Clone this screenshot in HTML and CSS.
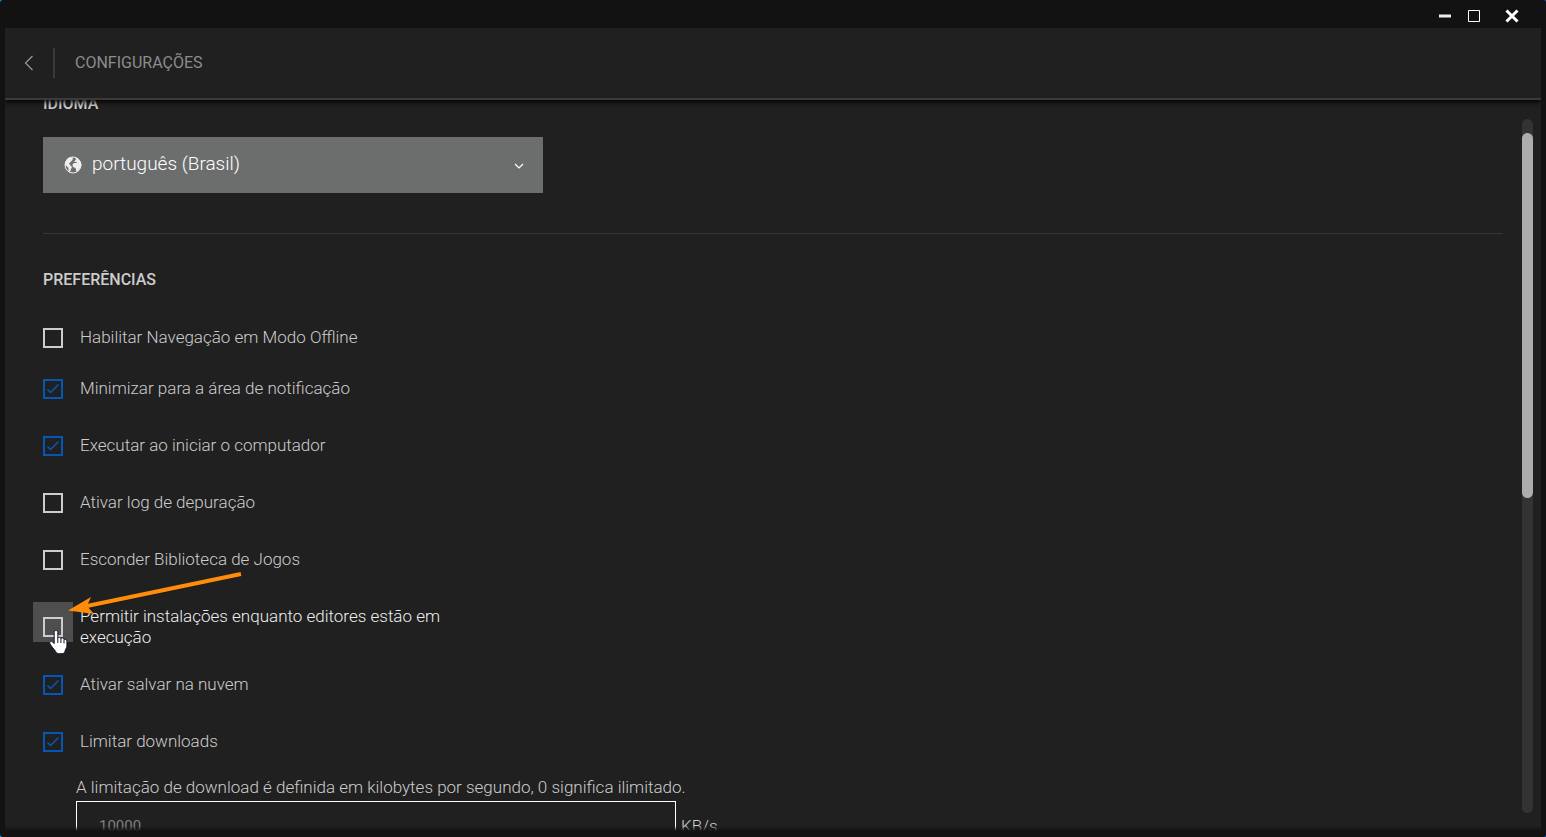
FILE: index.html
```
<!DOCTYPE html>
<html lang="pt-BR">
<head>
<meta charset="utf-8">
<title>Configurações</title>
<link rel="stylesheet" href="styles.css">
</head>
<body>
<div class="window">
  <div class="titlebar">
    <button class="win-btn" type="button" aria-label="Minimizar"><svg width="12" height="12" viewBox="0 0 12 12"><path d="M0 4.500h12v3H0z" fill="#eee"/></svg></button>
    <button class="win-btn" type="button" aria-label="Maximizar"><svg width="12" height="12" viewBox="0 0 12 12"><path d="M.5.5h11v11H.5z" fill="none" stroke="#fff"/></svg></button>
    <button class="win-btn win-close" type="button" aria-label="Fechar"><svg width="14" height="14" viewBox="0 0 14 14"><path d="M1.500 1.500l11 11M12.500 1.500l-11 11" stroke="#fff" stroke-width="3"/></svg></button>
  </div>
  <header class="header">
    <button class="back" type="button" aria-label="Voltar"><svg width="10" height="16" viewBox="0 0 10 16"><path d="M8.500 1L1.500 8l7 7" fill="none" stroke="#999" stroke-width="1.200"/></svg></button>
    <h1 class="title">CONFIGURAÇÕES</h1>
  </header>
  <main class="view">
    <div class="content">
      <section class="language">
        <h2 class="heading"><label for="lang">IDIOMA</label></h2>
        <div class="select-wrap">
          <svg class="globe" width="18" height="18" viewBox="0 0 18 18"><circle cx="9" cy="9" r="8" fill="none" stroke="#eee" stroke-width="1"/><path d="M1 7L3 3l3-2 3 .5L8.500 4 6.500 6 5 7.500 6.500 9.500 8 11 7 13l-1 3L4.500 15.500 4.500 12 2.500 10 1 9zM10 6l2-2.500-1-1L13 2l3 3 1.500 4-1.500 3-2 3-1.500 1-1-4-2.500-1-.5-2.500L10 7h2.500l.5-1z" fill="#eee"/></svg>
          <select class="select" id="lang"><option>português (Brasil)</option></select>
          <svg class="chevron" width="10" height="6" viewBox="0 0 10 6"><path d="M1 1l4 4 4-4" fill="none" stroke="#fff" stroke-width="1.200"/></svg>
        </div>
      </section>
      <section class="preferences">
        <h2 class="heading">PREFERÊNCIAS</h2>
        <div class="row row-first"><input class="check" type="checkbox" id="p1"><label for="p1">Habilitar Navegação em Modo Offline</label></div>
        <div class="row"><input class="check" type="checkbox" id="p2" checked><label for="p2">Minimizar para a área de notificação</label></div>
        <div class="row"><input class="check" type="checkbox" id="p3" checked><label for="p3">Executar ao iniciar o computador</label></div>
        <div class="row"><input class="check" type="checkbox" id="p4"><label for="p4">Ativar log de depuração</label></div>
        <div class="row"><input class="check" type="checkbox" id="p5"><label for="p5">Esconder Biblioteca de Jogos</label></div>
        <div class="row row-active"><input class="check" type="checkbox" id="p6"><label for="p6">Permitir instalações enquanto editores estão em execução</label>
          <svg class="pointer" width="220" height="90" viewBox="0 0 220 90" aria-hidden="true">
            <path d="M207.500 2.500L56 34.500" stroke="#111" stroke-width="4" opacity=".4" transform="translate(1 2)"/>
            <path d="M208 4L54 36" stroke="#ff8c0a" stroke-width="4"/>
            <path d="M35 40.500L58 27 54 36 61 44z" fill="#ff8c0a"/>
            <path d="M21.200 62.500c0-2.700 3.600-2.700 3.600 0v5.500c.8-1.200 2.800-.9 3.100.5 1-1 2.700-.6 3.100.9 1.400-.7 2.900.1 2.900 1.700v4.700c0 2.300-1.800 3.600-1.800 5.200-.3 2-1.500 2.700-4.600 2.700s-4.600-.5-5-2.500c-1.500-2-3.900-4.700-5.300-7-1.300-2.200.7-3.800 2.400-2.300l1.600 1.700z" fill="#fff" stroke="#151b2c" stroke-width="1"/>
            <path d="M24.800 68v5M27.900 68.500v4.500M31 69.400v4" stroke="#151b2c" stroke-width="1"/>
          </svg>
        </div>
        <div class="row row-after"><input class="check" type="checkbox" id="p7" checked><label for="p7">Ativar salvar na nuvem</label></div>
        <div class="row"><input class="check" type="checkbox" id="p8" checked><label for="p8">Limitar downloads</label></div>
        <div class="limit">
          <label for="rate">A limitação de download é definida em kilobytes por segundo, 0 significa ilimitado.</label>
          <div class="rate-line"><input class="rate" type="text" id="rate" placeholder="10000"><span>KB/s</span></div>
        </div>
      </section>
    </div>
    <div class="track"><div class="thumb"></div></div>
  </main>
</div>
</body>
</html>
```
FILE: styles.css
```
* { box-sizing: border-box; }
body {
  margin: 0;
  background: linear-gradient(90deg, #0a9fff, #0050c8);
  font: 300 17px/21px Roboto, "Liberation Sans", sans-serif;
  color: #ccc;
}
button { background: none; border: 0; padding: 0; color: inherit; display: grid; place-items: center; }
.window {
  height: 100vh;
  display: flex;
  flex-direction: column;
  background: #121212;
  border-radius: 3px;
  padding: 0 5px 6px;
}
.titlebar {
  flex: none;
  height: 28px;
  padding: 4px 22px 0 0;
  display: flex;
  justify-content: flex-end;
  align-items: center;
  gap: 17px;
}
.win-close { margin-left: 8px; }
.header {
  flex: none;
  height: 72px;
  background: #202020;
  border-bottom: 2px solid #3a3a3a;
  box-shadow: 0 2px 5px #000;
  clip-path: inset(0 0 -10px 0);
  z-index: 1;
  display: flex;
  align-items: center;
}
.back { width: 50px; height: 30px; border-right: 2px solid #3a3a3a; }
.title { margin: 0 0 0 20px; padding-bottom: 2px; font-size: 16px; font-weight: 400; color: #8c8c8c; }
.view {
  position: relative;
  flex: 1;
  min-height: 0;
  overflow: hidden;
  background: #202020;
  display: flex;
  gap: 19px;
  padding: 0 8px 0 38px;
}
.view::after {
  content: "";
  position: absolute;
  inset: auto 0 0;
  height: 5px;
  background: linear-gradient(transparent, #121212);
}
.content { flex: 1; margin-top: -6px; }
.heading { margin: 0; font-size: 16px; line-height: 20px; font-weight: 500; color: #ccc; }
.language { border-bottom: 1px solid #363636; padding-bottom: 40px; }
.select-wrap {
  position: relative;
  max-width: 500px;
  margin-top: 23px;
}
.select {
  appearance: none;
  display: block;
  width: 100%;
  height: 56px;
  padding: 0 48px 4px 49px;
  border: 0;
  border-radius: 0;
  background: #6c6e6d;
  color: #fff;
  font: inherit;
  font-size: 19px;
}
.globe { position: absolute; left: 21px; top: 19px; }
.chevron { position: absolute; right: 19px; top: 26px; }
.preferences { padding-top: 36px; }
.row {
  position: relative;
  display: flex;
  align-items: center;
  gap: 17px;
  max-width: 420px;
  margin-top: 36px;
}
.row-first { margin-top: 37px; margin-bottom: -6px; }
.row-after { margin-top: 26px; }
.row-active { color: #eee; }
.check {
  appearance: none;
  flex: none;
  width: 20px;
  height: 20px;
  margin: 0;
  border: 2px solid #ccc;
}
.check:checked {
  border-color: #0656b5;
  background: url("data:image/svg+xml,%3Csvg xmlns='http://www.w3.org/2000/svg' viewBox='0 0 16 16'%3E%3Cpath d='M2.500 8.500l3 3 8-8' fill='none' stroke='%230656b5' stroke-width='1.500'/%3E%3C/svg%3E") center / 16px 16px;
}
.row-active .check { background: #4e4e4e; box-shadow: 0 -5px 0 10px #4e4e4e; }
.pointer { position: absolute; left: -10px; top: -36px; }
.limit { margin: 25px 0 0 33px; }
.limit label { display: block; }
.rate-line { display: flex; align-items: center; gap: 5px; margin-top: 3px; }
.rate {
  width: 600px;
  height: 50px;
  padding: 0 22px;
  border: 1px solid #fff;
  background: transparent;
  color: #808080;
  font: inherit;
  font-size: 15px;
  font-weight: 400;
}
.rate::placeholder { color: #808080; }
.track {
  flex: none;
  width: 11px;
  margin: 19px 0 18px;
  padding-top: 14px;
  border-radius: 6px;
  background: #333;
}
.thumb { height: 365px; border-radius: 6px; background: #adadad; }
```
